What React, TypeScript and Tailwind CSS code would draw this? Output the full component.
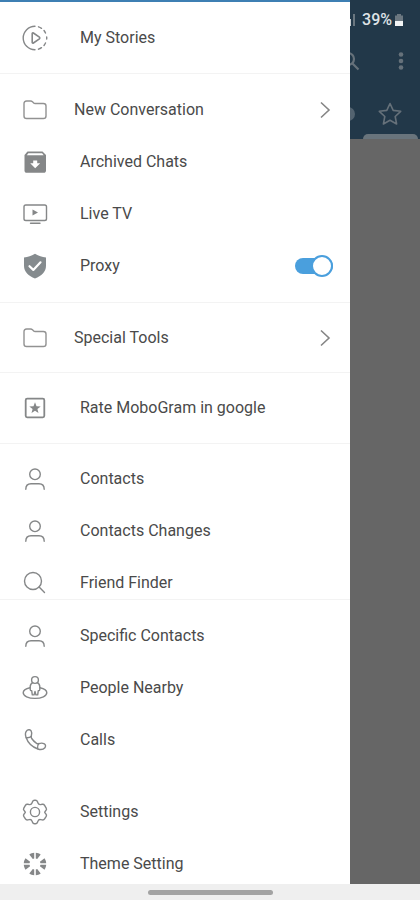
import type { ReactNode } from "react";

const Svg = ({ children }: { children: ReactNode }) => (
  <svg
    viewBox="0 0 26 26"
    className="w-[26px] h-[26px] shrink-0"
    fill="none"
    stroke="currentColor"
    strokeWidth="1.4"
    strokeLinecap="round"
    strokeLinejoin="round"
    aria-hidden="true"
  >
    {children}
  </svg>
);

const StoriesIcon = () => (
  <Svg>
    <path d="M13 1.2a11.8 11.8 0 0 0 0 23.6" />
    <path d="M16.500 1.800a11.800 11.800 0 0 1 3 1.500M22 5.500a11.800 11.800 0 0 1 1.500 2.500M24.700 12a11.800 11.800 0 0 1 0 2M23.500 18a11.800 11.800 0 0 1-1.500 2.500M19.500 22.700a11.800 11.800 0 0 1-3 1.500" />
    <path
      d="M10.2 8.600v8.800c0 .7.6 1 1.200.6l6-4.200c.5-.4.5-1.200 0-1.600l-6-4.200c-.6-.4-1.200-.1-1.200.6z"
      strokeWidth="1.600"
    />
  </Svg>
);

const FolderIcon = () => (
  <Svg>
    <path d="M2 6.700c0-1.700.9-2.700 2.600-2.700h4c.8 0 1.300.2 1.900.8l1.200 1.200c.4.4.8.5 1.400.5h8.300c1.700 0 2.600.9 2.600 2.600v9.800c0 1.700-.9 2.600-2.600 2.600H4.600C2.900 21.500 2 20.600 2 18.900z" />
  </Svg>
);

const ArchiveIcon = () => (
  <Svg>
    <path
      d="M5.500 2.500h15L24 6v15.500c0 1.400-.9 2.300-2.300 2.300H4.800c-1.400 0-2.300-.9-2.300-2.300V6z"
      fill="currentColor"
      stroke="none"
    />
    <path d="M6.300 4.300h13.800l1.600 2H4.800z" fill="#fff" stroke="none" />
    <path d="M11.200 11.500h4v2.700h3L13.200 19.200 8.200 14.200h3z" fill="#fff" stroke="none" />
  </Svg>
);

const TvIcon = () => (
  <Svg>
    <rect x="2" y="4" width="22.500" height="15.500" rx="1.800" />
    <path d="M10.500 8.500v6l5.500-3z" fill="currentColor" stroke="none" />
    <path d="M8.500 22.300h9.500" />
  </Svg>
);

const ShieldIcon = () => (
  <Svg>
    <path
      d="M13 .8c3.400 2 6.800 3.100 11 3.700v8.200c0 6-4.600 10.200-11 12.800C6.600 22.900 2 18.700 2 12.700V4.500C6.200 3.900 9.600 2.800 13 .8z"
      fill="currentColor"
      stroke="none"
    />
    <path d="M7.500 13.200l3.800 3.700 7.200-7.600" stroke="#fff" strokeWidth="2.200" />
  </Svg>
);

const RateIcon = () => (
  <Svg>
    <rect x="3.700" y="3.700" width="18.600" height="18.600" rx="1.500" strokeWidth="1.800" />
    <path
      d="M13 7.300l1.500 3.900 4.200.2-3.300 2.600 1.100 4.100-3.500-2.300-3.500 2.300 1.100-4.100-3.300-2.600 4.200-.2z"
      fill="currentColor"
      stroke="none"
    />
  </Svg>
);

const PersonIcon = () => (
  <Svg>
    <circle cx="13" cy="8.300" r="5.300" />
    <path d="M3.800 23.300c0-3.600 2-5.500 5.200-5.500h8c3.200 0 5.200 1.900 5.200 5.500" />
  </Svg>
);

const SearchIcon = () => (
  <Svg>
    <circle cx="11" cy="11" r="8.500" />
    <path d="M17.100 17.100l5.400 5.400" />
  </Svg>
);

const NearbyIcon = () => (
  <Svg>
    <circle cx="13" cy="5" r="3.400" />
    <path d="M10.700 7.600c-1.700.9-2.500 2.300-2.500 4.200v2.600c0 .8.700 1.300 1.500 1.300l.6 4.200h1.800l.9-3.400.9 3.400h1.800l.6-4.200c.8 0 1.500-.5 1.500-1.300v-2.600c0-1.900-.8-3.300-2.500-4.200" />
    <path d="M8 12.800c-4 .8-6.800 2.600-6.800 5 0 3.200 5.200 5.600 11.800 5.600s11.800-2.400 11.800-5.600c0-2.400-2.800-4.200-6.800-5" />
  </Svg>
);

const PhoneIcon = () => (
  <Svg>
    <path d="M5.200 3.300c1.300-1 3.100-.7 3.900.6.9 1.500.9 3.400.2 5.300-.3.900-.2 1.500.4 2.300 1.300 2 2.900 3.500 4.900 4.800.8.500 1.400.6 2.300.3 1.900-.7 3.900-.6 5.500.3 1.300.8 1.500 2.600.5 3.800-1.600 1.900-4.100 2.300-7 1.300C9.700 19.900 6 16.200 4 10.300c-1-2.900-.7-5.400 1.200-7z" />
    <path d="M9.300 9.200c-1.200 1.400-2.900 1.700-5.100 1.500M16.900 16.600c-1.300 1.300-1.700 2.900-1.300 5" />
  </Svg>
);

const SettingsIcon = () => (
  <Svg>
    <circle cx="13" cy="13" r="4.600" />
    <path d="M10.500 2.700c.3-.9 1-1.500 2-1.500h1c1 0 1.700.6 2 1.500l.5 1.400c.4 1.100 1.500 1.700 2.600 1.500l1.600-.3c1-.2 1.900.2 2.400 1l1.600 2.800c.5.900.4 1.800-.3 2.500l-.8.800c-.5.500-.5 1.200 0 1.700l.8.800c.7.700.8 1.600.3 2.500l-1.600 2.500c-.5.800-1.400 1.200-2.400 1l-1.600-.3c-1.100-.2-2.200.4-2.600 1.500l-.5 1.200c-.3.900-1 1.500-2 1.500h-1c-1 0-1.700-.6-2-1.500l-.5-1.200c-.4-1.100-1.500-1.700-2.600-1.500l-1.600.3c-1 .2-1.900-.2-2.400-1l-1.600-2.500c-.5-.9-.4-1.800.3-2.500l.8-.8c.5-.5.5-1.200 0-1.700l-.8-.8c-.7-.7-.8-1.600-.3-2.500l1.600-2.800c.5-.8 1.400-1.200 2.400-1l1.600.3c1.100.2 2.200-.4 2.600-1.500z" />
  </Svg>
);

const ThemeIcon = () => (
  <Svg>
    {[0, 90, 180, 270].map((angle) => (
      <g key={angle} transform={`rotate(${angle} 13 13)`} fill="currentColor" stroke="none">
        <path d="M12.200 1.800v5.700l-1.400.6-3.500-4.600c1.500-1 3.100-1.600 4.900-1.700z" />
        <path d="M13.800 1.800v5.700l1.400.6 3.500-4.600c-1.500-1-3.100-1.600-4.900-1.700z" />
      </g>
    ))}
  </Svg>
);

const Chevron = () => (
  <svg viewBox="0 0 12 18" className="w-3 h-[18px] mr-[19px]" fill="none" stroke="#858585" strokeWidth="1.6" aria-hidden="true">
    <path d="M2 1.500l8 7.500-8 7.500" />
  </svg>
);

interface ItemProps {
  icon: ReactNode;
  label: string;
}

const Item = ({ icon, label }: ItemProps) => (
  <button type="button" className="flex items-center gap-8 w-full h-[52px] pl-[22px] text-left">
    <span className="text-[#858788]">{icon}</span>
    {label}
  </button>
);

const FolderItem = ({ label }: { label: string }) => (
  <button type="button" className="flex items-center gap-[26px] w-full h-[52px] pl-[22px] text-left">
    <span className="text-[#929292]">
      <FolderIcon />
    </span>
    <span className="flex-1">{label}</span>
    <Chevron />
  </button>
);

const ProxyItem = () => (
  <label className="flex items-center gap-8 h-[52px] pl-[22px] pr-[17px]">
    <span className="text-[#858b8e]">
      <ShieldIcon />
    </span>
    <span className="flex-1">Proxy</span>
    <input type="checkbox" defaultChecked className="peer sr-only" />
    <span className="flex items-center justify-start peer-checked:justify-end w-[38px] h-4 rounded-full bg-[#4a9fdd]">
      <span className="w-[22px] h-[22px] shrink-0 rounded-full border-2 border-[#4a9fdd] bg-white" />
    </span>
  </label>
);

const AppHeader = () => (
  <header className="h-[139px] flex flex-col items-end bg-[#223849] text-[#66717a]">
    <div className="h-10 flex items-center pr-4 text-base font-medium text-[#dfe3e6]">
      <svg viewBox="0 0 16 14" className="w-4 h-3.5 mr-1.5" fill="#6b7780" aria-hidden="true">
        <path d="M1 9h2v4H1zM5 7h2v6H5zM13 1h2v12h-2z" />
        <path d="M8 6h3v7H8z" fill="#c9ced2" />
      </svg>
      39%
      <svg viewBox="0 0 10 14" className="w-2.5 h-3.5 ml-0.5" aria-hidden="true">
        <path d="M3 1h4v1.500h2V8H1V2.500h2z" fill="#6b7780" />
        <path d="M1 8h8v5H1z" fill="#f2f4f5" />
      </svg>
    </div>
    <div className="h-[42px] flex items-center gap-[34px] pr-3">
      <button type="button" aria-label="Search">
        <svg viewBox="0 0 20 20" className="w-5 h-5" fill="none" stroke="currentColor" strokeWidth="2.200">
          <circle cx="8" cy="8" r="6" />
          <path d="M12.500 12.500l6 6" />
        </svg>
      </button>
      <button type="button" aria-label="More options">
        <svg viewBox="0 0 14 20" className="w-3.5 h-5" fill="currentColor">
          <circle cx="7" cy="3.500" r="2.300" />
          <circle cx="7" cy="10" r="2.300" />
          <circle cx="7" cy="16.500" r="2.300" />
        </svg>
      </button>
    </div>
    <div className="flex-1 flex items-center gap-[23px] pr-[18px] pt-3">
      <span className="w-3.5 h-3.5 rounded-full bg-[#536370]" />
      <button type="button" aria-label="Favorites">
        <svg viewBox="0 0 24 24" className="w-6 h-6" fill="none" stroke="currentColor" strokeWidth="1.600" strokeLinejoin="round">
          <path d="M12 1.500l3.200 6.900 7.500.9-5.500 5.200 1.400 7.500L12 18.300 5.400 22l1.400-7.500L1.300 9.300l7.500-.9z" />
        </svg>
      </button>
    </div>
    <div className="w-[55px] h-[5px] mr-0.5 rounded-t-full bg-[#69747c]" />
  </header>
);

const App: React.FC = () => {
  return (
    <div className="h-screen flex flex-col font-[Roboto,sans-serif] bg-[#666666]">
      <div className="relative flex-1 min-h-0 overflow-hidden">
        <AppHeader />

        <nav className="absolute inset-y-0 left-0 w-5/6 overflow-hidden border-t-2 border-[#3e7fb3] bg-white text-base text-[#4a4a4a] divide-y divide-[#f3f3f3]">
          <div className="pt-2.5 pb-[9px]">
            <Item icon={<StoriesIcon />} label="My Stories" />
          </div>
          <div className="py-2.5">
            <FolderItem label="New Conversation" />
            <Item icon={<ArchiveIcon />} label="Archived Chats" />
            <Item icon={<TvIcon />} label="Live TV" />
            <ProxyItem />
          </div>
          <div className="pt-[9px] pb-2">
            <FolderItem label="Special Tools" />
          </div>
          <div className="py-[9px]">
            <Item icon={<RateIcon />} label="Rate MoboGram in google" />
          </div>
          <div className="pt-[9px]">
            <Item icon={<PersonIcon />} label="Contacts" />
            <Item icon={<PersonIcon />} label="Contacts Changes" />
            <div className="h-[42px]">
              <Item icon={<SearchIcon />} label="Friend Finder" />
            </div>
          </div>
          <div className="pt-2.5">
            <Item icon={<PersonIcon />} label="Specific Contacts" />
            <Item icon={<NearbyIcon />} label="People Nearby" />
            <Item icon={<PhoneIcon />} label="Calls" />
            <div className="pt-5">
              <Item icon={<SettingsIcon />} label="Settings" />
              <Item icon={<ThemeIcon />} label="Theme Setting" />
            </div>
          </div>
        </nav>
      </div>

      <div className="h-4 shrink-0 flex items-center justify-center bg-[#efefef]">
        <div className="w-[125px] h-[5px] rounded-sm bg-[#a3a3a3]" />
      </div>
    </div>
  );
};

export default App;
